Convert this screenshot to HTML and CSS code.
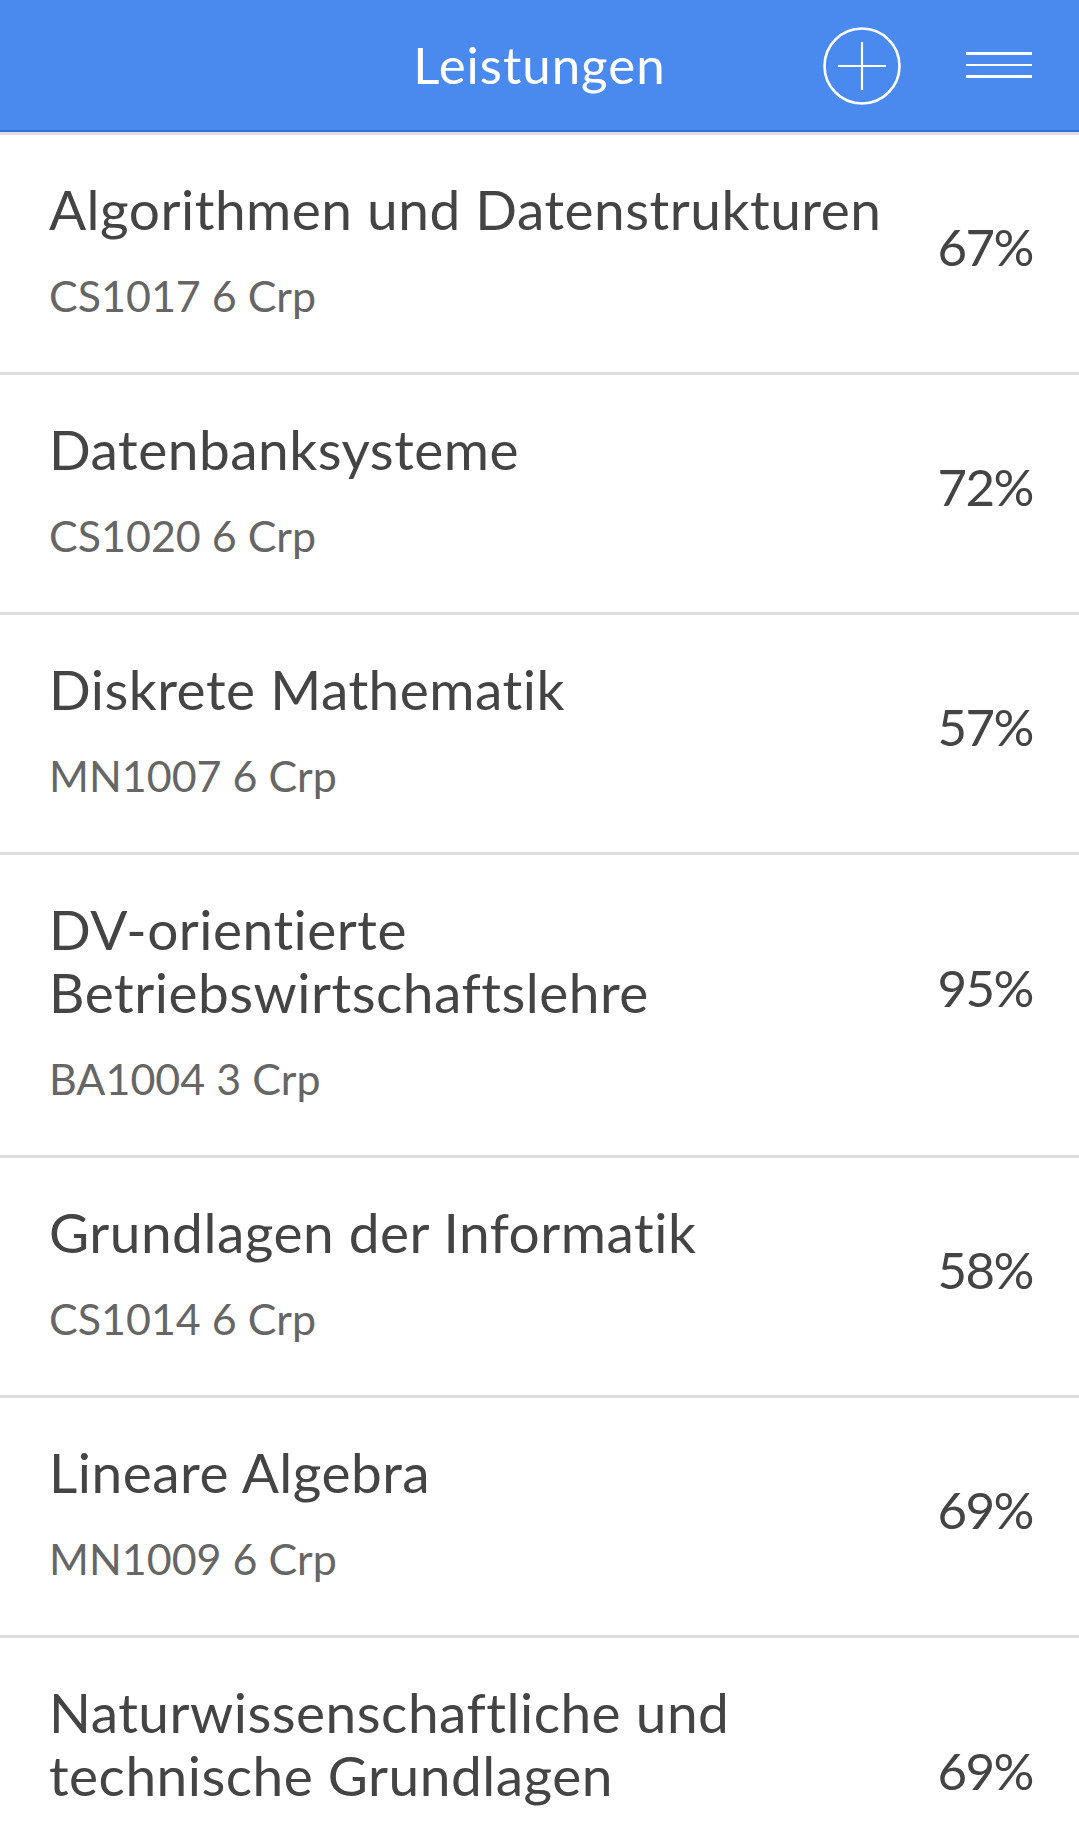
FILE: index.html
```html
<!DOCTYPE html>
<html lang="de">
<head>
<meta charset="utf-8">
<title>Leistungen</title>
<link rel="stylesheet" href="styles.css">
</head>
<body>
<header class="topbar">
  <div class="topbar-spacer"></div>
  <h1 class="topbar-title">Leistungen</h1>
  <div class="topbar-actions">
    <svg class="icon-add" width="80" height="80" viewBox="0 0 80 80" aria-label="Hinzufügen">
      <circle cx="40" cy="40" r="37.5" fill="none" stroke="#fff" stroke-width="2.6"/>
      <line x1="16" y1="40" x2="64" y2="40" stroke="#fff" stroke-width="2.2"/>
      <line x1="40" y1="16" x2="40" y2="64" stroke="#fff" stroke-width="2.2"/>
    </svg>
    <div class="icon-menu" aria-label="Menü">
      <span></span><span></span><span></span>
    </div>
  </div>
</header>
<ul class="list">
  <li class="row">
    <div class="row-text">
      <div class="row-title">Algorithmen und Datenstrukturen</div>
      <div class="row-sub">CS1017 6 Crp</div>
    </div>
    <div class="row-grade">67%</div>
  </li>
  <li class="row">
    <div class="row-text">
      <div class="row-title">Datenbanksysteme</div>
      <div class="row-sub">CS1020 6 Crp</div>
    </div>
    <div class="row-grade">72%</div>
  </li>
  <li class="row">
    <div class="row-text">
      <div class="row-title">Diskrete Mathematik</div>
      <div class="row-sub">MN1007 6 Crp</div>
    </div>
    <div class="row-grade">57%</div>
  </li>
  <li class="row row--tall">
    <div class="row-text">
      <div class="row-title">DV-orientierte Betriebswirtschaftslehre</div>
      <div class="row-sub">BA1004 3 Crp</div>
    </div>
    <div class="row-grade">95%</div>
  </li>
  <li class="row">
    <div class="row-text">
      <div class="row-title">Grundlagen der Informatik</div>
      <div class="row-sub">CS1014 6 Crp</div>
    </div>
    <div class="row-grade">58%</div>
  </li>
  <li class="row">
    <div class="row-text">
      <div class="row-title">Lineare Algebra</div>
      <div class="row-sub">MN1009 6 Crp</div>
    </div>
    <div class="row-grade">69%</div>
  </li>
  <li class="row row--tall">
    <div class="row-text">
      <div class="row-title">Naturwissenschaftliche und technische Grundlagen</div>
      <div class="row-sub">MN1001 6 Crp</div>
    </div>
    <div class="row-grade">69%</div>
  </li>
</ul>
</body>
</html>
```

FILE: styles.css
```css
html, body {
  margin: 0;
  padding: 0;
  background: #ffffff;
}

body {
  font-family: Lato, "Open Sans", "Liberation Sans", sans-serif;
  height: 1845px;
  overflow: hidden;
}

.topbar {
  display: grid;
  grid-template-columns: 1fr auto 1fr;
  align-items: center;
  height: 130px;
  background: #4a89ee;
  border-bottom: 2px solid #2f6fdc;
}

.topbar-title {
  margin: 0;
  font-size: 51px;
  letter-spacing: 1px;
  font-weight: 400;
  line-height: 60px;
  color: #ffffff;
}

.topbar-actions {
  display: flex;
  align-items: center;
  justify-content: flex-end;
  gap: 64px;
  padding-right: 47px;
}

.icon-add {
  display: block;
  margin-top: 1px;
}

.icon-menu {
  display: flex;
  flex-direction: column;
  gap: 8.5px;
  width: 66px;
}

.icon-menu span {
  display: block;
  height: 2.7px;
  background: #ffffff;
}

.list {
  list-style: none;
  margin: 0;
  padding: 0;
}

.row {
  display: flex;
  align-items: center;
  border-top: 3px solid #dddddd;
  padding: 43px 46px 51.5px 49px;
}

.row-text {
  flex: 1;
  min-width: 0;
}

.row-title {
  font-size: 55px;
  letter-spacing: 0.5px;
  line-height: 63px;
  color: #444444;
}

.row-sub {
  margin-top: 29.5px;
  font-size: 43px;
  line-height: 50px;
  color: #666666;
}

.row-grade {
  margin-left: 40px;
  margin-bottom: 5px;
  font-size: 51px;
  letter-spacing: -1.5px;
  line-height: 60px;
  color: #444444;
}

.row--tall .row-grade {
  margin-bottom: 26px;
}
```
